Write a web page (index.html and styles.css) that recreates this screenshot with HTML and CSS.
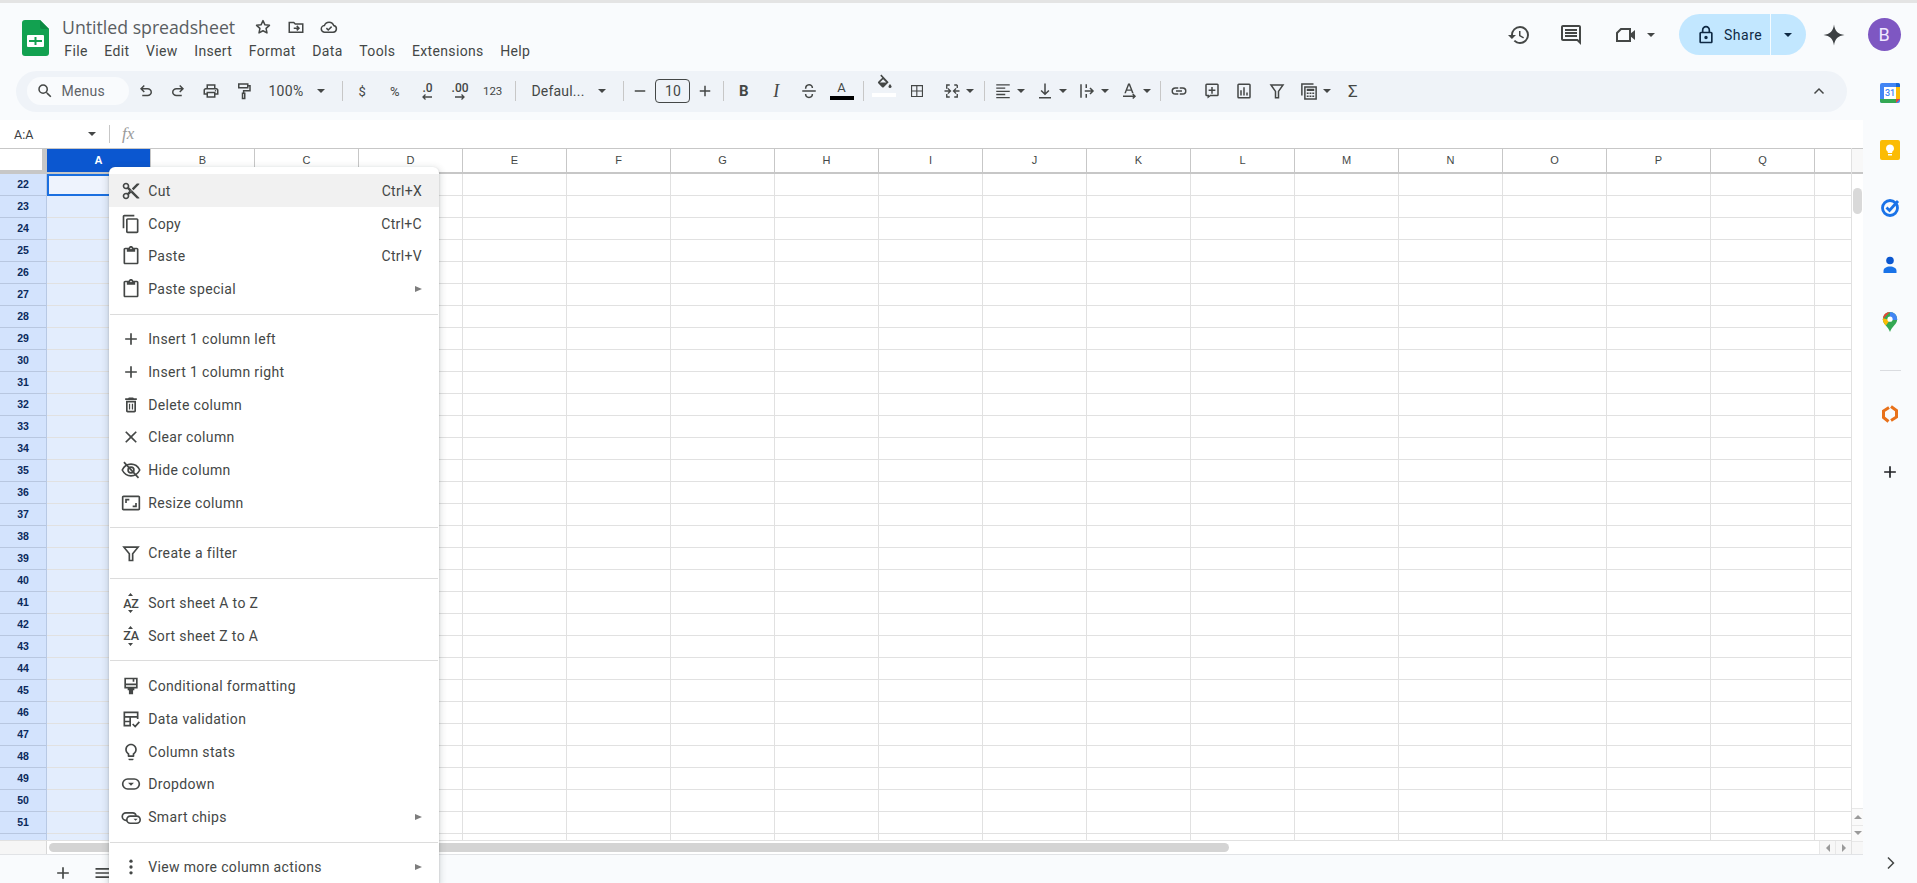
FILE: index.html
```html
<!DOCTYPE html>
<html lang="en">
<head>
<meta charset="utf-8">
<title>Untitled spreadsheet</title>
<link rel="stylesheet" href="styles.css">
</head>
<body>
<div class="topline"></div>
<header class="header">
  <svg class="logo" viewBox="0 0 27 36"><path fill="#12a150" d="M3 0h15l9 9v24a3 3 0 0 1-3 3H3a3 3 0 0 1-3-3V3a3 3 0 0 1 3-3z"/><path fill="#0c8a42" d="M18 0l9 9h-7a2 2 0 0 1-2-2z"/><rect x="5" y="15" width="17" height="12" rx="1" fill="#fff"/><path stroke="#12a150" stroke-width="2" d="M13.5 17v8M7 21h13"/></svg>
  <div class="doc">
    <div class="title-row">
      <span class="title">Untitled spreadsheet</span>
      <svg class="ti star" viewBox="0 0 24 24"><path fill="none" stroke="#444746" stroke-width="2" stroke-linejoin="round" d="M12 3.5l2.6 5.6 6 .7-4.5 4.1 1.2 6L12 17l-5.3 2.9 1.2-6-4.5-4.1 6-.7z"/></svg>
      <svg class="ti" viewBox="0 0 24 24"><path fill="none" stroke="#444746" stroke-width="2" d="M3 6h6l2 2h10v11H3z"/><path fill="none" stroke="#444746" stroke-width="2" d="M9 13.5h7M13 10.5l3 3-3 3"/></svg>
      <svg class="ti" viewBox="0 0 24 24"><path fill="none" stroke="#444746" stroke-width="2" d="M6.5 19a4.5 4.5 0 0 1-.6-9A6.5 6.5 0 0 1 18.3 10.100a4.500 4.500 0 0 1-.8 8.900z"/><path fill="none" stroke="#444746" stroke-width="2" d="M8.500 13.500l2.500 2.500 4.500-4.500"/></svg>
    </div>
    <nav class="menubar">
      <span class="mi">File</span><span class="mi">Edit</span><span class="mi">View</span><span class="mi">Insert</span><span class="mi">Format</span><span class="mi">Data</span><span class="mi">Tools</span><span class="mi">Extensions</span><span class="mi">Help</span>
    </nav>
  </div>
  <div class="actions">
    <span class="hbtn"><svg viewBox="0 0 24 24"><path d="M13 3a9 9 0 0 0-9 9H1l3.890 3.890.070.140L9 12H6c0-3.870 3.130-7 7-7s7 3.130 7 7-3.130 7-7 7c-1.930 0-3.680-.790-4.940-2.060l-1.420 1.420A8.954 8.954 0 0 0 13 21a9 9 0 0 0 0-18zm-1 5v5l4.280 2.540.720-1.210-3.500-2.080V8H12z"/></svg></span>
    <span class="hbtn hbtn-comment"><svg viewBox="0 0 24 24"><path d="M21.990 4c0-1.100-.890-2-1.990-2H4c-1.100 0-2 .900-2 2v12c0 1.100.900 2 2 2h14l4 4-.010-18zM20 4v13.170L18.830 16H4V4h16zM6 12h12v2H6zm0-3h12v2H6zm0-3h12v2H6z"/></svg></span>
    <span class="hbtn hbtn-video"><svg viewBox="0 0 24 24"><path fill="none" stroke="#444746" stroke-width="2" d="M7 6h9v12H3V10z"/><path d="M16 11l5-4v10l-5-4z"/></svg><i class="caret"></i></span>
    <div class="share"><span class="share-main"><svg viewBox="0 0 24 24"><path d="M18 8h-1V6c0-2.760-2.240-5-5-5S7 3.240 7 6v2H6c-1.100 0-2 .900-2 2v10c0 1.100.900 2 2 2h12c1.100 0 2-.900 2-2V10c0-1.100-.900-2-2-2zM9 6c0-1.660 1.340-3 3-3s3 1.340 3 3v2H9V6zm9 14H6V10h12v10zm-6-3c1.100 0 2-.900 2-2s-.900-2-2-2-2 .900-2 2 .900 2 2 2z"/></svg>Share</span><span class="share-drop"><i class="caret caret-dark"></i></span></div>
    <span class="hbtn hbtn-spark"><svg viewBox="0 0 24 24"><path d="M12 1.500C12.800 8 16 11.200 22.500 12 16 12.800 12.800 16 12 22.500 11.200 16 8 12.800 1.500 12 8 11.200 11.200 8 12 1.500z"/></svg></span>
    <span class="avatar">B</span>
  </div>
</header>
<div class="workspace">
  <main class="app">
    <div class="toolbar">
      <span class="tsearch"><svg viewBox="0 0 24 24"><path d="M15.500 14h-.790l-.280-.270A6.471 6.471 0 0 0 16 9.500 6.500 6.500 0 1 0 9.500 16c1.610 0 3.090-.590 4.230-1.570l.270.280v.790l5 4.990L20.490 19l-4.990-5zm-6 0C7.010 14 5 11.990 5 9.500S7.010 5 9.500 5 14 7.010 14 9.500 11.990 14 9.500 14z"/></svg>Menus</span>
      <span class="tb tb-undo"><svg viewBox="0 0 24 24"><path d="M7 19v-2h7.100q1.575 0 2.737-1 1.163-1 1.163-2.500T16.837 11Q15.675 10 14.100 10H7.800l2.600 2.600L9 14 4 9l5-5 1.400 1.400L7.800 8h6.300q2.425 0 4.163 1.575Q20 11.150 20 13.500q0 2.350-1.737 3.925Q16.525 19 14.100 19Z"/></svg></span>
      <span class="tb"><svg class="flip" viewBox="0 0 24 24"><path d="M7 19v-2h7.100q1.575 0 2.737-1 1.163-1 1.163-2.500T16.837 11Q15.675 10 14.100 10H7.800l2.600 2.600L9 14 4 9l5-5 1.400 1.400L7.800 8h6.300q2.425 0 4.163 1.575Q20 11.150 20 13.500q0 2.350-1.737 3.925Q16.525 19 14.100 19Z"/></svg></span>
      <span class="tb"><svg viewBox="0 0 24 24"><path d="M19 8h-1V3H6v5H5c-1.660 0-3 1.340-3 3v6h4v4h12v-4h4v-6c0-1.660-1.340-3-3-3zM8 5h8v3H8V5zm8 12v2H8v-4h8v2zm2-2v-2H6v2H4v-4c0-.550.450-1 1-1h14c.550 0 1 .450 1 1v4h-2z"/><circle cx="18" cy="11.500" r="1"/></svg></span>
      <span class="tb"><svg viewBox="0 0 24 24"><path fill="none" stroke="#444746" stroke-width="2" d="M5 2.500h12v5H5zM17 5h3v6.500h-8.500V15M10 15h3v7h-3z"/></svg></span>
      <span class="tzoom">100%<i class="caret"></i></span>
      <i class="sep sep-zoom"></i>
      <span class="tb txt">$</span><span class="tb txt">%</span>
      <span class="tb dec"><b>.0</b><svg viewBox="0 0 12 6"><path fill="none" stroke="#444746" stroke-width="1.300" d="M11 3H2M4.500 .5L2 3l2.500 2.500"/></svg></span>
      <span class="tb dec"><b>.00</b><svg viewBox="0 0 12 6"><path fill="none" stroke="#444746" stroke-width="1.300" d="M1 3h9M7.500 .5L10 3 7.500 5.500"/></svg></span>
      <span class="tb txt txt-sm">123</span>
      <i class="sep sep-num"></i>
      <span class="tfont">Defaul...<i class="caret"></i></span>
      <i class="sep sep-font"></i>
      <span class="tsize-minus"><svg viewBox="0 0 24 24"><path d="M5 11h14v2H5z"/></svg></span>
      <span class="tsize">10</span>
      <span class="tsize-plus"><svg viewBox="0 0 24 24"><path d="M19 13h-6v6h-2v-6H5v-2h6V5h2v6h6v2z"/></svg></span>
      <i class="sep sep-size"></i>
      <span class="tb tb-bold">B</span>
      <span class="tb tb-ital">I</span>
      <span class="tb"><svg viewBox="0 0 24 24"><path fill="none" stroke="#444746" stroke-width="2" d="M3 12h18M7.500 9c0-7 9-7 9-1M7.500 16c0 6 9 6 9 0"/></svg></span>
      <span class="tb tb-color"><span>A</span><i class="bar bar-black"></i></span>
      <i class="sep sep-text"></i>
      <span class="tb tb-fill"><svg viewBox="0 0 24 24"><path d="M8.500 2L7 3.500l2.700 2.700-5.400 5.400c-.6.600-.6 1.500 0 2.100l5.200 5.200c.6.600 1.500.6 2.100 0l6.600-6.600zM6.500 12.500l4.300-4.300 4.300 4.300z"/><path d="M20 14.500s-2 2.200-2 3.500a2 2 0 0 0 4 0c0-1.300-2-3.500-2-3.500z"/></svg><i class="bar bar-white"></i></span>
      <span class="tb tb-thin"><svg viewBox="0 0 24 24"><path d="M4 4v16h16V4zm7 14.500H5.500V12.800H11zm0-7.200H5.500V5.500H11zm7.500 7.200h-6v-5.700h6zm0-7.200h-6V5.500h6z"/></svg></span>
      <span class="tbd tbd-first"><svg viewBox="0 0 24 24"><path fill="none" stroke="#444746" stroke-width="1.800" d="M9 4H5v4h-1M5 4v4M9 20H5v-4M19 4h-4M19 4v4M15 20h4v-4M2 12h7M6.500 8.500L10 12l-3.500 3.500M22 12h-7M17.500 8.500L14 12l3.500 3.500"/></svg><i class="caret"></i></span>
      <i class="sep sep-merge"></i>
      <span class="tbd"><svg viewBox="0 0 24 24"><path d="M3 3h18v1.800H3zm0 4.300h12v1.800H3zm0 4.200h18v1.800H3zm0 4.300h12v1.800H3zm0 4.200h18v1.800H3z"/></svg><i class="caret"></i></span>
      <span class="tbd"><svg viewBox="0 0 24 24"><path d="M4 20h16v2H4zM11 2h2v12l3.500-3.500 1.400 1.400L12 17.800l-5.900-5.900 1.400-1.400L11 14z"/></svg><i class="caret"></i></span>
      <span class="tbd"><svg viewBox="0 0 24 24"><path d="M3 3h2v18H3zM10 3h2v5h-2zm0 13h2v5h-2z"/><path fill="none" stroke="#444746" stroke-width="2" d="M9 12h11M16 8l4 4-4 4"/></svg><i class="caret"></i></span>
      <span class="tbd"><svg viewBox="0 0 24 24"><path d="M10.800 2h2.400l5 13h-2.200l-1.100-3.200H9l-1.100 3.200H5.800zm-1.100 8H14.300L12 4.200z"/><path fill="none" stroke="#444746" stroke-width="2" d="M4 19h16M17 16l3 3-3 3"/></svg><i class="caret"></i></span>
      <i class="sep sep-align"></i>
      <span class="tb"><svg viewBox="0 0 24 24"><path d="M3.900 12c0-1.700 1.400-3.100 3.100-3.100h4V7H7a5 5 0 0 0 0 10h4v-1.900H7c-1.700 0-3.100-1.400-3.100-3.100zM8 13h8v-2H8zm9-6h-4v1.900h4c1.700 0 3.100 1.400 3.100 3.100s-1.400 3.100-3.100 3.100h-4V17h4a5 5 0 0 0 0-10z"/></svg></span>
      <span class="tb"><svg viewBox="0 0 24 24"><path d="M21 4a2 2 0 0 0-2-2H5a2 2 0 0 0-2 2v13a2 2 0 0 0 2 2h1v3l4-3h9a2 2 0 0 0 2-2zM5 4h14v13H9.500L8 18.200V17H5zm6 2.500h2V10h3.500v2H13v3.500h-2V12H7.500v-2H11z"/></svg></span>
      <span class="tb"><svg viewBox="0 0 24 24"><path d="M19 2H5a2 2 0 0 0-2 2v16a2 2 0 0 0 2 2h14a2 2 0 0 0 2-2V4a2 2 0 0 0-2-2zm0 18H5V4h14zM7 11h2v7H7zm4-4h2v11h-2zm4 7h2v4h-2z"/></svg></span>
      <span class="tb"><svg viewBox="0 0 24 24"><path fill="none" stroke="#444746" stroke-width="2" d="M4 4h16l-6 8.500V21h-4v-8.500z"/></svg></span>
      <span class="tbd tbd-calc"><svg viewBox="0 0 24 24"><path fill="none" stroke="#444746" stroke-width="2" d="M2.500 18V2.500H18M6.500 6.500h15v16h-15z"/><path d="M9 9h10v3H9zm0 5h2.500v2H9zm3.700 0h2.500v2h-2.500zm3.700 0h2.500v2h-2.500zM9 18h2.500v2H9zm3.700 0h2.500v2h-2.500zm3.700 0h2.500v2h-2.500z"/></svg><i class="caret"></i></span>
      <span class="tb txt txt-sigma">Σ</span>
      <span class="tb tb-collapse"><svg viewBox="0 0 24 24"><path d="M12 8l-6.700 6.700 1.400 1.400 5.300-5.300 5.300 5.300 1.400-1.400z"/></svg></span>
    </div>
    <div class="formula">
      <span class="namebox">A:A<i class="caret"></i></span>
      <i class="fsep"></i>
      <span class="fx">fx</span>
    </div>
    <div class="sheet">
      <div class="grid">
        <div class="colhead">
          <span class="corner"></span>
          <span class="col col-on">A</span><span class="col">B</span><span class="col">C</span><span class="col">D</span><span class="col">E</span><span class="col">F</span><span class="col">G</span><span class="col">H</span><span class="col">I</span><span class="col">J</span><span class="col">K</span><span class="col">L</span><span class="col">M</span><span class="col">N</span><span class="col">O</span><span class="col">P</span><span class="col">Q</span><span class="col col-end"></span>
        </div>
        <div class="gridbody">
          <div class="rowhead">
            <span>22</span><span>23</span><span>24</span><span>25</span><span>26</span><span>27</span><span>28</span><span>29</span><span>30</span><span>31</span><span>32</span><span>33</span><span>34</span><span>35</span><span>36</span><span>37</span><span>38</span><span>39</span><span>40</span><span>41</span><span>42</span><span>43</span><span>44</span><span>45</span><span>46</span><span>47</span><span>48</span><span>49</span><span>50</span><span>51</span><span></span>
          </div>
          <div class="cells"><div class="activecell"></div></div>
        </div>
        <div class="hbar">
          <span class="hblank"></span>
          <span class="hthumb"></span>
          <span class="sarrow"><i class="tri tri-l"></i></span><span class="sarrow"><i class="tri tri-r"></i></span>
        </div>
      </div>
      <div class="vbar">
        <span class="vhead"></span>
        <span class="vthumb"></span>
        <span class="varrow"><i class="tri tri-u"></i></span>
        <span class="varrow"><i class="tri tri-d"></i></span>
        <span class="vcorner"></span>
      </div>
    </div>
    <div class="tabs">
      <span class="tabbtn"><svg viewBox="0 0 24 24"><path d="M19 13h-6v6h-2v-6H5v-2h6V5h2v6h6v2z"/></svg></span>
      <span class="tabbtn"><svg viewBox="0 0 24 24"><path d="M3 6h18v2H3zm0 5h18v2H3zm0 5h18v2H3z"/></svg></span>
    </div>
  </main>
  <aside class="side">
    <span class="sico"><svg viewBox="0 0 20 20"><rect width="20" height="20" rx="2" fill="#4285f4"/><rect x="4" y="4" width="12" height="12" fill="#fff"/><path fill="#34a853" d="M0 16h16v4H2a2 2 0 0 1-2-2z"/><path fill="#fbbc04" d="M16 4h4v12h-4z"/><path fill="#ea4335" d="M16 16h4l-4 4z"/><path fill="#1967d2" d="M16 0h2a2 2 0 0 1 2 2v2h-4z"/><text class="caltxt" x="10" y="13">31</text></svg></span>
    <span class="sico"><svg viewBox="0 0 20 20"><rect width="20" height="20" rx="2" fill="#fbbc04"/><path fill="#fff" d="M10 4.500a4 4 0 0 0-2.200 7.300V13h4.400v-1.200A4 4 0 0 0 10 4.500zM8 14h4v1.500H8z"/></svg></span>
    <span class="sico"><svg viewBox="0 0 20 20"><circle cx="10" cy="11" r="7.500" fill="none" stroke="#1a73e8" stroke-width="2.800"/><path fill="none" stroke="#1a73e8" stroke-width="2.800" d="M6.500 10.500l3 3L18 4"/></svg></span>
    <span class="sico"><svg viewBox="0 0 20 20"><circle cx="10" cy="5.500" r="3.800" fill="#0b57d0"/><path fill="#1a73e8" d="M3.500 18v-2c0-3 3-4.500 6.500-4.500s6.500 1.500 6.500 4.500v2z"/></svg></span>
    <span class="sico"><svg viewBox="0 0 20 20"><defs><clipPath id="pin"><path d="M10 0a7.200 7.200 0 0 0-7.200 7.200c0 4.800 5.200 7 7.200 12.800 2-5.800 7.200-8 7.200-12.800A7.200 7.200 0 0 0 10 0z"/></clipPath></defs><g clip-path="url(#pin)"><rect width="20" height="20" fill="#34a853"/><path fill="#4285f4" d="M10 0h8v8l-8 0z"/><path fill="#ea4335" d="M10 0H2v8z"/><path fill="#fbbc04" d="M2 6l8 2-6 8-2-4z"/></g><circle cx="10" cy="7.200" r="2.600" fill="#fff"/></svg></span>
    <i class="sdiv"></i>
    <span class="sico"><svg viewBox="0 0 20 20"><path fill="none" stroke="#e8711a" stroke-width="3" d="M9 3.500L3.500 7v6.500l5 4M11 2.500l5.500 4V13L11 16.500"/></svg></span>
    <span class="sico"><svg viewBox="0 0 24 24"><path fill="#202124" d="M19 13h-6v6h-2v-6H5v-2h6V5h2v6h6v2z"/></svg></span>
    <span class="sico sico-end"><svg viewBox="0 0 24 24"><path fill="#444746" d="M8.600 5.400L10 4l8 8-8 8-1.400-1.400L15.200 12z"/></svg></span>
  </aside>
</div>

<div class="menu">
  <div class="item item-hover"><svg viewBox="0 0 24 24"><path d="M9.640 7.640c.230-.500.360-1.050.360-1.640 0-2.210-1.790-4-4-4S2 3.790 2 6s1.790 4 4 4c.590 0 1.140-.130 1.640-.360L10 12l-2.360 2.360C7.140 14.130 6.590 14 6 14c-2.210 0-4 1.790-4 4s1.790 4 4 4 4-1.790 4-4c0-.590-.130-1.140-.360-1.640L12 14l7 7h3v-1L9.640 7.640zM6 8c-1.100 0-2-.890-2-2s.900-2 2-2 2 .890 2 2-.900 2-2 2zm0 12c-1.100 0-2-.890-2-2s.900-2 2-2 2 .890 2 2-.900 2-2 2zm6-7.500c-.280 0-.500-.220-.500-.500s.220-.500.500-.500.500.220.500.500-.220.500-.500.500zM19 3l-6 6 2 2 7-7V3h-3z"/></svg><span>Cut</span><em>Ctrl+X</em></div>
  <div class="item"><svg viewBox="0 0 24 24"><path d="M16 1H4c-1.100 0-2 .900-2 2v14h2V3h12V1zm3 4H8c-1.100 0-2 .900-2 2v14c0 1.100.900 2 2 2h11c1.100 0 2-.900 2-2V7c0-1.100-.900-2-2-2zm0 16H8V7h11v14z"/></svg><span>Copy</span><em>Ctrl+C</em></div>
  <div class="item"><svg viewBox="0 0 24 24"><path d="M19 2h-4.180C14.400.840 13.300 0 12 0c-1.300 0-2.400.840-2.820 2H5c-1.100 0-2 .900-2 2v16c0 1.100.900 2 2 2h14c1.100 0 2-.900 2-2V4c0-1.100-.900-2-2-2zm-7 0c.550 0 1 .450 1 1s-.450 1-1 1-1-.450-1-1 .450-1 1-1zm7 18H5V4h2v3h10V4h2v16z"/></svg><span>Paste</span><em>Ctrl+V</em></div>
  <div class="item"><svg viewBox="0 0 24 24"><path d="M19 2h-4.180C14.400.840 13.300 0 12 0c-1.300 0-2.400.840-2.820 2H5c-1.100 0-2 .900-2 2v16c0 1.100.900 2 2 2h14c1.100 0 2-.900 2-2V4c0-1.100-.900-2-2-2zm-7 0c.550 0 1 .450 1 1s-.450 1-1 1-1-.450-1-1 .450-1 1-1zm7 18H5V4h2v3h10V4h2v16z"/></svg><span>Paste special</span><i class="sub"></i></div>
  <hr class="div">
  <div class="item"><svg viewBox="0 0 24 24"><path d="M19 13h-6v6h-2v-6H5v-2h6V5h2v6h6v2z"/></svg><span>Insert 1 column left</span></div>
  <div class="item"><svg viewBox="0 0 24 24"><path d="M19 13h-6v6h-2v-6H5v-2h6V5h2v6h6v2z"/></svg><span>Insert 1 column right</span></div>
  <div class="item"><svg viewBox="0 0 24 24"><path d="M6 19c0 1.100.900 2 2 2h8c1.100 0 2-.900 2-2V7H6v12zM8 9h8v10H8V9zm7.500-5l-1-1h-5l-1 1H5v2h14V4zM9.500 10.500h1.500v7H9.500zm3.500 0h1.500v7H13z"/></svg><span>Delete column</span></div>
  <div class="item"><svg viewBox="0 0 24 24"><path d="M19 6.410L17.590 5 12 10.590 6.410 5 5 6.410 10.590 12 5 17.590 6.410 19 12 13.410 17.590 19 19 17.590 13.410 12z"/></svg><span>Clear column</span></div>
  <div class="item"><svg viewBox="0 0 24 24"><path fill="none" stroke="#444746" stroke-width="2" d="M1.500 12C4 7 8 5 12 5s8 2 10.500 7C20 17 16 19 12 19S4 17 1.500 12z"/><circle cx="12" cy="12" r="3.500" fill="none" stroke="#444746" stroke-width="2"/><path stroke="#444746" stroke-width="2" d="M3.500 2.500l17.500 19"/></svg><span>Hide column</span></div>
  <div class="item"><svg viewBox="0 0 24 24"><path d="M19 12h-2v3h-3v2h5v-5zM7 9h3V7H5v5h2V9zm14-6H3c-1.100 0-2 .900-2 2v14c0 1.100.900 2 2 2h18c1.100 0 2-.900 2-2V5c0-1.100-.900-2-2-2zm0 16.010H3V4.990h18v14.020z"/></svg><span>Resize column</span></div>
  <hr class="div">
  <div class="item"><svg viewBox="0 0 24 24"><path fill="none" stroke="#444746" stroke-width="2" d="M3.500 5h17L14 13v8h-4v-8z"/></svg><span>Create a filter</span></div>
  <hr class="div">
  <div class="item"><span class="sorti">AZ<svg viewBox="0 0 8 24"><path d="M4 0l3 3.500H1zM4 24l-3-3.500h6z"/></svg></span><span>Sort sheet A to Z</span></div>
  <div class="item"><span class="sorti">ZA<svg viewBox="0 0 8 24"><path d="M4 0l3 3.500H1zM4 24l-3-3.500h6z"/></svg></span><span>Sort sheet Z to A</span></div>
  <hr class="div">
  <div class="item"><svg viewBox="0 0 24 24"><path fill="none" stroke="#444746" stroke-width="2" d="M5 3h14v11H5zM5 10h14M15 3v4"/><path d="M8 14h8v3h-1.500v5h-5v-5H8z"/></svg><span>Conditional formatting</span></div>
  <div class="item"><svg viewBox="0 0 24 24"><path fill="none" stroke="#444746" stroke-width="2" d="M12 20H4V4h16v8M4 9.500h16M4 15h8M11 9.500V20M14 18l3 3 5-5.500"/></svg><span>Data validation</span></div>
  <div class="item"><svg viewBox="0 0 24 24"><path d="M9 21c0 .550.450 1 1 1h4c.550 0 1-.450 1-1v-1H9v1zm3-19C8.140 2 5 5.140 5 9c0 2.380 1.190 4.470 3 5.740V17c0 .550.450 1 1 1h6c.550 0 1-.450 1-1v-2.260c1.810-1.270 3-3.360 3-5.740 0-3.860-3.140-7-7-7zm2.850 11.100l-.850.600V16h-4v-2.300l-.850-.600C7.800 12.160 7 10.630 7 9c0-2.760 2.240-5 5-5s5 2.240 5 5c0 1.630-.800 3.160-2.150 4.100z"/></svg><span>Column stats</span></div>
  <div class="item"><svg viewBox="0 0 24 24"><rect x="2" y="6" width="20" height="12" rx="6" fill="none" stroke="#444746" stroke-width="2"/><path d="M8.500 10.500h7L12 14z"/></svg><span>Dropdown</span></div>
  <div class="item"><svg viewBox="0 0 24 24"><path fill="none" stroke="#444746" stroke-width="2" d="M9 16H6a4.500 4.500 0 0 1 0-9h8a4 4 0 0 1 4 3.500"/><rect x="7" y="11" width="16" height="8.500" rx="4.200" fill="#fff" stroke="#444746" stroke-width="2"/><path d="M15 14h5l-2.500 2.500z"/></svg><span>Smart chips</span><i class="sub"></i></div>
  <hr class="div">
  <div class="item"><svg viewBox="0 0 24 24"><circle cx="12" cy="5" r="2"/><circle cx="12" cy="12" r="2"/><circle cx="12" cy="19" r="2"/></svg><span>View more column actions</span><i class="sub"></i></div>
</div>
</body>
</html>
```
FILE: styles.css
```css
* { box-sizing: border-box; }
html, body { height: 100%; }
body {
  margin: 0;
  height: 883px;
  overflow: hidden;
  background: #f9fbfd;
  font-family: Roboto, "Liberation Sans", sans-serif;
  color: #444746;
  display: flex;
  flex-direction: column;
  position: relative;
}
svg { display: block; fill: #444746; }
i { display: block; font-style: normal; }

.topline { height: 3px; flex: none; background: #e4e4e4; }

.caret { width: 0; height: 0; border-left: 4px solid transparent; border-right: 4px solid transparent; border-top: 4px solid #444746; flex: none; }
.caret-dark { border-top-color: #0f2a44; }

/* header */
.header { height: 63px; flex: none; display: flex; align-items: flex-start; padding-left: 21.500px; }
.logo { width: 27px; height: 36px; margin-top: 17px; flex: none; }
.doc { margin-left: 13.500px; padding-top: 11px; }
.title-row { display: flex; align-items: center; height: 26px; }
.title { font-family: "Open Sans", sans-serif; font-size: 17.700px; line-height: 26px; color: #5a5e62; width: 193px; }
.ti { width: 18px; height: 18px; margin-right: 15px; flex: none; }
.ti.star { margin-left: -1px; }
.menubar { display: flex; margin-left: -6px; margin-top: 1px; }
.mi { padding: 0 8.300px; font-size: 14px; line-height: 20px; letter-spacing: .35px; color: #444746; }

.actions { margin-left: auto; display: flex; align-items: center; height: 41px; margin-top: 11px; padding-right: 16.500px; }
.hbtn { width: 40px; height: 40px; display: flex; align-items: center; justify-content: center; gap: 5px; flex: none; }
.hbtn svg { width: 24px; height: 24px; }
.hbtn-comment { margin-left: 12px; }
.hbtn-video { margin-left: 14px; width: 56px; justify-content: flex-start; padding-left: 9px; gap: 10px; }
.hbtn-video .caret { margin-left: -1px; }
.share { margin-left: 18px; width: 127px; height: 41px; border-radius: 21px; background: #c2e7ff; display: flex; color: #0f2a44; }
.share-main { width: 92px; border-right: 1px solid #f4fbff; display: flex; align-items: center; padding-left: 17px; gap: 8px; font-size: 14px; letter-spacing: .5px; }
.share-main svg { width: 20px; height: 20px; fill: #0f2a44; }
.share-drop { flex: 1; display: flex; align-items: center; padding-left: 13px; }
.hbtn-spark { margin-left: 8px; }
.hbtn-spark svg { fill: #3c4043; }
.avatar { margin-left: 13.500px; width: 33px; height: 33px; border-radius: 50%; background: #7e57c2; color: #f0e8ff; font-size: 18px; display: flex; align-items: center; justify-content: center; flex: none; }

/* layout */
.workspace { flex: 1; display: flex; min-height: 0; }
.app { width: 1863px; flex: none; display: flex; flex-direction: column; }
.side { flex: 1; display: flex; flex-direction: column; align-items: center; }
.sico { height: 54px; display: flex; align-items: center; justify-content: center; margin-bottom: 3.200px; flex: none; }
.sico svg { width: 20px; height: 20px; }
.caltxt { font: 500 9px Roboto, sans-serif; fill: #4285f4; text-anchor: middle; }
.sdiv { width: 21px; height: 1px; background: #dadce0; margin: 18.500px 0 16px; flex: none; }
.sico-end { margin: auto 0 -7px; }
.sico-end svg { width: 18px; height: 18px; }

/* toolbar */
.toolbar { height: 41px; margin: 5px 16px 8px 16px; border-radius: 21px; background: #eff3f8; display: flex; align-items: center; padding: 0 0 1px 10.500px; flex: none; }
.toolbar svg { width: 18px; height: 18px; }
.tsearch { width: 102px; height: 28px; margin-right: 1px; border-radius: 14px; background: #f9fbfd; display: flex; align-items: center; gap: 8px; padding-left: 9px; font-size: 14px; letter-spacing: .2px; color: #5f6368; flex: none; }
.tb { width: 32.600px; height: 28px; display: flex; align-items: center; justify-content: center; flex: none; }
.flip { transform: scaleX(-1); }
.tzoom { width: 77.600px; display: flex; align-items: center; padding-left: 8.500px; gap: 14px; font-size: 14px; letter-spacing: .3px; flex: none; }
.sep { width: 1px; height: 20px; background: #c7c7c7; flex: none; }
.sep-zoom { margin: 0 3px 0 4.500px; }
.sep-num { margin: 0 0 0 6.500px; }
.sep-font { margin: 0 0 0 4px; }
.sep-size { margin: 0 3.500px 0 2.500px; }
.sep-text { margin: 0 3.500px 0 5px; }
.sep-merge { margin: 0 3px 0 5px; }
.sep-align { margin: 0 2.500px 0 3.500px; }
.txt { font-size: 13px; }
.txt-sm { font-size: 11.500px; }
.txt-sigma { font-size: 17px; }
.dec { flex-direction: column; gap: 0; line-height: 11px; }
.dec b { font-weight: 500; font-size: 12px; }
.toolbar .dec svg { width: 12px; height: 6px; }
.tfont { width: 103px; padding-left: 15px; display: flex; align-items: center; gap: 13px; font-size: 14px; letter-spacing: .2px; flex: none; }
.tsize-minus { width: 31px; display: flex; justify-content: center; flex: none; }
.tsize-plus { width: 30px; display: flex; justify-content: center; flex: none; }
.tsize { width: 35px; height: 24px; border: 1px solid #444746; border-radius: 4px; font-size: 14px; text-align: center; line-height: 22px; flex: none; }
.tb-bold { font-weight: 700; font-size: 15px; }
.tb-ital { font-family: "Liberation Serif", serif; font-style: italic; font-size: 18px; }
.tb-color, .tb-fill { flex-direction: column; position: relative; justify-content: flex-start; }
.tb-color span { font-size: 13px; line-height: 17px; margin-top: 2px; }
.bar { width: 24px; height: 4px; flex: none; }
.bar-black { background: #000; margin-top: 0; }
.bar-white { background: #fff; margin-top: 2px; height: 4px; }
.tb-fill { margin-top: -6px; height: 30px; }
.tb-thin { margin-left: .500px; }
.tbd { width: 42px; height: 28px; display: flex; align-items: center; justify-content: center; gap: 5px; flex: none; }
.tbd-first { margin-left: 4px; }
.tbd-calc { margin-left: 1.100px; }
.tb-collapse { margin-left: auto; margin-right: 11.700px; }

/* formula bar */
.formula { height: 28px; background: #fff; display: flex; align-items: center; flex: none; }
.namebox { width: 109px; padding-left: 14px; padding-right: 13px; display: flex; justify-content: space-between; align-items: center; font-size: 12.500px; color: #3c4043; flex: none; }
.fsep { width: 1px; height: 18px; background: #c7c7c7; flex: none; }
.fx { margin-left: 12px; font-family: "Liberation Serif", serif; font-style: italic; font-size: 17px; color: #9a9a9a; }

/* sheet */
.sheet { flex: 1; display: flex; min-height: 0; background: #fff; }
.grid { width: 1851px; flex: none; display: flex; flex-direction: column; }
.colhead { height: 26px; flex: none; display: flex; border-top: 1px solid #c7c7c7; border-bottom: 2px solid #c7c7c7; }
.corner { width: 47px; flex: none; background: #fff; border-right: 5px solid #c7c7c7; margin-bottom: -2px; border-bottom: 4px solid #c7c7c7; }
.col { width: 104px; flex: none; border-right: 1px solid #c7c7c7; font: 11px/23px "Liberation Sans", sans-serif; text-align: center; color: #444746; }
.col-on { background: #0b57d0; color: #fff; font-weight: 700; }
.col-end { flex: 1; border-right: 0; }
.gridbody { flex: 1; display: flex; min-height: 0; overflow: hidden; }
.rowhead { width: 47px; flex: none; background: #d3e3fd; border-right: 1px solid #b8c9e4; }
.rowhead span { display: block; height: 22px; border-bottom: 1px solid #b8c7e0; font: 700 10.500px/21px "Liberation Sans", sans-serif; text-align: center; color: #0b2a5c; }
.cells {
  flex: 1;
  position: relative;
  background-color: #fff;
  background-image:
    linear-gradient(to left, #e1e1e1 1px, transparent 1px),
    linear-gradient(to top, #e1e1e1 1px, transparent 1px),
    linear-gradient(#e3edfd, #e3edfd);
  background-size: 104px 100%, 100% 22px, 104px 100%;
  background-repeat: repeat-x, repeat-y, no-repeat;
}
.activecell { position: absolute; left: 0; top: 0; width: 104px; height: 22px; border: 2px solid #1a6fe0; background: #eef3fd; }
.hbar { height: 14px; flex: none; display: flex; align-items: center; background: #fff; border-top: 1px solid #e1e1e1; }
.hblank { width: 47px; height: 100%; flex: none; background: #f6f6f6; border-right: 1px solid #d8d8d8; }
.hthumb { margin-left: 2px; width: 1180px; height: 9px; border-radius: 5px; background: #d4d4d4; flex: none; }
.sarrow { margin-left: auto; width: 16px; height: 100%; display: flex; align-items: center; justify-content: center; background: #f7f7f7; border-left: 1px solid #e8e8e8; flex: none; }
.sarrow + .sarrow { margin-left: 0; }
.tri { width: 0; height: 0; border: 4px solid transparent; }
.tri-l { border-right-color: #9a9a9a; border-left-width: 0; }
.tri-r { border-left-color: #9a9a9a; border-right-width: 0; }
.tri-u { border-bottom-color: #9a9a9a; border-top-width: 0; }
.tri-d { border-top-color: #9a9a9a; border-bottom-width: 0; }
.vbar { flex: 1; display: flex; flex-direction: column; border-left: 1px solid #e1e1e1; background: #fff; }
.vhead { height: 26px; flex: none; background: #f8f8f8; border-top: 1px solid #c7c7c7; border-bottom: 2px solid #c7c7c7; }
.vthumb { width: 9px; height: 26px; margin: 14px 0 0 1px; border-radius: 5px; background: #d9d9d9; flex: none; }
.varrow { height: 16.500px; display: flex; align-items: center; justify-content: center; border-top: 1px solid #e8e8e8; background: #fafafa; flex: none; }
.vthumb + .varrow { margin-top: auto; }
.vcorner { height: 13px; flex: none; background: #f7f7f7; border-top: 1px solid #e8e8e8; }

.tabs { height: 29px; flex: none; display: flex; align-items: center; padding: 7px 0 0 43px; border-top: 1px solid #e1e3e6; background: #f9fbfd; }
.tabbtn { width: 40px; display: flex; justify-content: center; }
.tabbtn svg { width: 20px; height: 20px; }

/* context menu */
.menu {
  position: absolute;
  left: 109px;
  top: 167px;
  width: 330px;
  height: 716px;
  padding-top: 7.400px;
  background: #fff;
  border-radius: 6px 6px 0 0;
  box-shadow: 0 2px 6px 2px rgba(60, 64, 67, .15), 0 1px 2px rgba(60, 64, 67, .3);
  overflow: hidden;
}
.item { height: 32.750px; display: flex; align-items: center; padding: 0 17px 0 12px; font-size: 14px; letter-spacing: .35px; color: #444746; }
.item-hover { background: #f1f1f1; }
.item > svg, .sorti { width: 20px; height: 20px; flex: none; margin-right: 7.200px; }
.item > span:not(.sorti) { flex: 1; }
.item em { font-style: normal; letter-spacing: .3px; }
.sub { width: 0; height: 0; border-left: 7px solid #7d7d7d; border-top: 3.500px solid transparent; border-bottom: 3.500px solid transparent; flex: none; }
.div { height: 1px; border: 0; margin: 8.200px 1px; background: #dcdcdc; }
.sorti { position: relative; display: flex; align-items: center; justify-content: center; font-size: 12.500px; font-weight: 500; letter-spacing: -.2px; }
.sorti svg { position: absolute; left: 6px; top: 0; width: 7px; height: 20px; }
```
